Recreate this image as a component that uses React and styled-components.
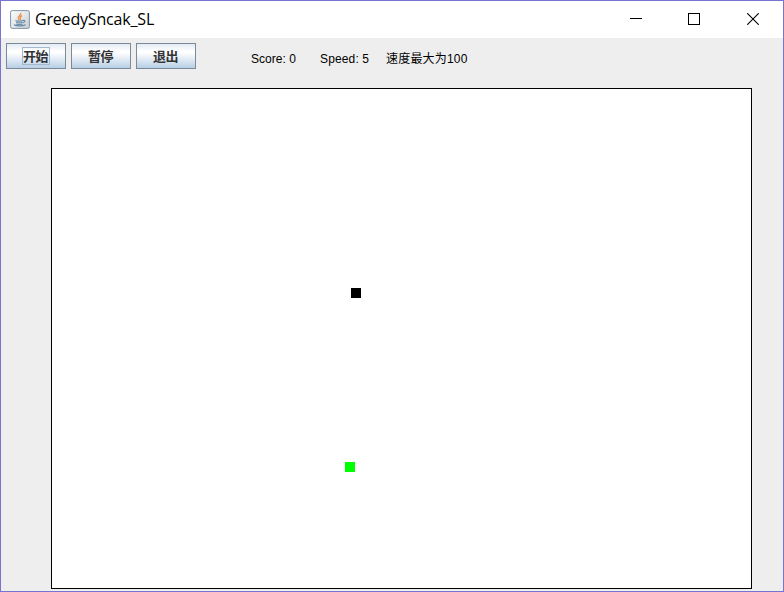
import React from "react";
import styled, { createGlobalStyle } from "styled-components";

const GlobalStyle = createGlobalStyle`
  * { box-sizing: border-box; }
  html, body { margin: 0; padding: 0; overflow: hidden; }
`;

const Window = styled.div`
  width: 784px;
  height: 592px;
  display: flex;
  flex-direction: column;
  background: #eeeeee;
  border: 1px solid #7875d2;
  font-family: "Liberation Sans", "Noto Sans CJK SC", sans-serif;
  color: #000;
`;

const TitleBar = styled.header`
  height: 37px;
  flex: none;
  display: flex;
  align-items: center;
  padding-left: 9px;
  background: #fff;
`;

const Title = styled.h1`
  margin: 0 0 2px 5px;
  flex: 1;
  font: 400 16px/22px "Open Sans", "Noto Sans", sans-serif;
  letter-spacing: -0.18px;
  white-space: nowrap;
`;

const WindowButton = styled.button`
  width: 58px;
  height: 36px;
  align-self: flex-start;
  padding: 0;
  border: 0;
  background: transparent;
  display: flex;
  align-items: center;
  justify-content: center;
  &:last-child { margin: 0 1px; }
`;

const Toolbar = styled.div`
  height: 50px;
  flex: none;
  display: flex;
  align-items: flex-start;
  padding: 5px 0 0 5px;
`;

const Buttons = styled.div`
  display: flex;
  gap: 5px;
`;

const MetalButton = styled.button`
  width: 60px;
  height: 26px;
  padding: 0;
  display: flex;
  align-items: center;
  justify-content: center;
  border: 1px solid #7a8a99;
  background: linear-gradient(#e2ebf4 0%, #ffffff 30%, #ffffff 36%, #b8cfe5 100%);
  color: #333;
  font: 700 13px/17px "Noto Sans CJK SC", sans-serif;
`;

const Caption = styled.span`
  height: 18px;
  line-height: 16px;
  padding-right: 1px;
  letter-spacing: -0.5px;
  white-space: nowrap;
  border: 1px solid ${(p) => (p.$focused ? "#a3b8cc" : "transparent")};
`;

const Status = styled.div`
  display: flex;
  margin: 8px 0 0 55px;
  font-size: 12px;
  line-height: 16px;
  white-space: nowrap;
`;

const StatusItem = styled.span`
  width: ${(p) => p.$width}px;
  letter-spacing: ${(p) => p.$spacing || 0}px;
`;

const Board = styled.main`
  position: relative;
  width: 701px;
  height: 501px;
  flex: none;
  margin-left: 50px;
  border: 1px solid #000;
  background: #fff;
`;

const Cell = styled.div`
  position: absolute;
  left: ${(p) => p.$x}px;
  top: ${(p) => p.$y}px;
  width: 10px;
  height: 10px;
  background: ${(p) => p.$color};
`;

const JavaIcon = () => (
  <svg width="20" height="20" viewBox="0 0 20 20" fill="none">
    <defs>
      <linearGradient id="tile" x1="0" y1="0" x2="1" y2="1">
        <stop offset="0" stopColor="#ffffff" />
        <stop offset="1" stopColor="#c9cdd1" />
      </linearGradient>
    </defs>
    <rect x="0.6" y="0.6" width="18.8" height="17.8" rx="1.6" fill="url(#tile)" stroke="#8196a8" />
    <path d="M10.6 3C11.8 5 7.3 6.1 8.2 8.1C8.4 8.8 9 9.3 9.3 9.9M12.1 5.6C10.4 6.5 9.3 7.2 10.4 8.4C10.9 9 10.6 9.5 10.2 9.9" stroke="#e8883f" strokeWidth="1.25" />
    <path d="M5.5 10.5C7 11.3 11.5 11.3 13 10.5M6.2 12.3C8 13.1 11 13.1 12.6 12.3M13 10.5C15.6 9.8 15.2 12 13.2 12.8M4 14.7C6.5 16.4 12.8 16.3 15.6 14.7M6.3 14.1C8 14.8 11 14.8 12.5 14.1" stroke="#5f86a6" strokeWidth="1.1" />
  </svg>
);

const MinimizeIcon = () => (
  <svg width="12" height="12" viewBox="0 0 12 12" shapeRendering="crispEdges">
    <path d="M0 5.5H12" stroke="#000" />
  </svg>
);

const MaximizeIcon = () => (
  <svg width="12" height="12" viewBox="0 0 12 12" shapeRendering="crispEdges">
    <rect x="0.5" y="0.5" width="11" height="11" fill="none" stroke="#000" />
  </svg>
);

const CloseIcon = () => (
  <svg width="12" height="12" viewBox="0 0 12 12">
    <path d="M0.2 0.2L11.8 11.8M11.8 0.2L0.2 11.8" stroke="#000" strokeWidth="1.1" />
  </svg>
);

export default function App() {
  return (
    <>
      <GlobalStyle />
      <Window>
        <TitleBar>
          <JavaIcon />
          <Title>GreedySncak_SL</Title>
          <WindowButton aria-label="Minimize"><MinimizeIcon /></WindowButton>
          <WindowButton aria-label="Maximize"><MaximizeIcon /></WindowButton>
          <WindowButton aria-label="Close"><CloseIcon /></WindowButton>
        </TitleBar>
        <Toolbar>
          <Buttons>
            <MetalButton><Caption $focused>开始</Caption></MetalButton>
            <MetalButton><Caption>暂停</Caption></MetalButton>
            <MetalButton><Caption>退出</Caption></MetalButton>
          </Buttons>
          <Status>
            <StatusItem $width={69} $spacing={0.05}>Score: 0</StatusItem>
            <StatusItem $width={66} $spacing={0.14}>Speed: 5</StatusItem>
            <StatusItem $width={90} $spacing={0.2}>速度最大为100</StatusItem>
          </Status>
        </Toolbar>
        <Board>
          <Cell $x={299} $y={199} $color="#000" />
          <Cell $x={293} $y={373} $color="#00ff00" />
        </Board>
      </Window>
    </>
  );
}
